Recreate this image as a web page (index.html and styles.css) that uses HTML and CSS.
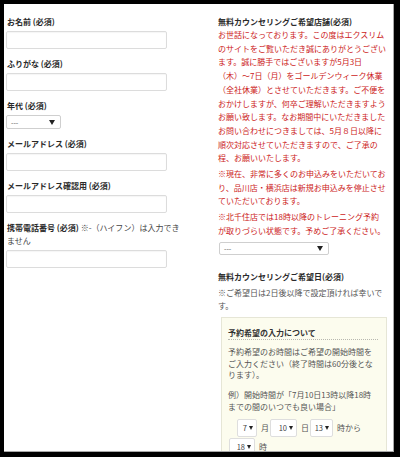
FILE: index.html
```html
<!DOCTYPE html>
<html lang="ja">
<head>
<meta charset="utf-8">
<link rel="stylesheet" href="styles.css">
</head>
<body>
<div class="page">
  <div class="col-left">
    <div class="field">
      <div class="label">お名前 (必須)</div>
      <div class="input"></div>
    </div>
    <div class="field">
      <div class="label">ふりがな (必須)</div>
      <div class="input"></div>
    </div>
    <div class="field">
      <div class="label">年代 (必須)</div>
      <div class="select select-age"><span>---</span><i class="tri"></i></div>
    </div>
    <div class="field">
      <div class="label">メールアドレス (必須)</div>
      <div class="input"></div>
    </div>
    <div class="field">
      <div class="label">メールアドレス確認用 (必須)</div>
      <div class="input"></div>
    </div>
    <div class="field">
      <div class="label">携帯電話番号 (必須) <span class="normal">※-（ハイフン）は入力でき<br>ません</span></div>
      <div class="input"></div>
    </div>
  </div>
  <div class="col-right">
    <div class="title">無料カウンセリングご希望店舗(必須)</div>
    <p class="notice">お世話になっております。この度はエクスリム<br>のサイトをご覧いただき誠にありがとうござい<br>ます。誠に勝手ではございますが5月3日<br>（木）～7日（月）をゴールデンウィーク休業<br>（全社休業）とさせていただきます。ご不便を<br>おかけしますが、何卒ご理解いただきますよう<br>お願い致します。なお期間中にいただきました<br>お問い合わせにつきましては、5月８日以降に<br>順次対応させていただきますので、ご了承の<br>程、お願いいたします。</p>
    <p class="notice gap">※現在、非常に多くのお申込みをいただいてお<br>り、品川店・横浜店は新規お申込みを停止させ<br>ていただいております。</p>
    <p class="notice gap">※北千住店では18時以降のトレーニング予約<br>が取りづらい状態です。予めご了承ください。</p>
    <div class="select select-shop"><span>---</span><i class="tri"></i></div>

    <div class="title title2">無料カウンセリングご希望日(必須)</div>
    <p class="note">※ご希望日は2日後以降で設定頂ければ幸いで<br>す。</p>
    <div class="box">
      <div class="box-title">予約希望の入力について</div>
      <p class="box-text first">予約希望のお時間はご希望の開始時間を<br>ご入力ください（終了時間は60分後とな<br>ります）。</p>
      <p class="box-text second">例）開始時間が「7月10日13時以降18時<br>までの間のいつでも良い場合」</p>
      <div class="sel-row row1">
        <span class="mini w20">7<i class="tri"></i></span><span class="unit">月</span>
        <span class="mini w27">10<i class="tri"></i></span><span class="unit">日</span>
        <span class="mini w23">13<i class="tri"></i></span><span class="unit">時から</span>
      </div>
      <div class="sel-row row2">
        <span class="mini w26">18<i class="tri"></i></span><span class="unit">時</span>
      </div>
    </div>
  </div>
</div>
</body>
</html>
```

FILE: styles.css
```css
html, body {
  margin: 0;
  padding: 0;
  height: 457px;
  overflow: hidden;
  background: #000;
}
body {
  font-family: "Noto Sans CJK JP", "Noto Sans", sans-serif;
  font-size: 8px;
  color: #333;
}
.page {
  margin: 4px 0 0 4px;
  width: 389px;
  height: 447px;
  background: #fff;
  border-right: 1px solid #a8a8a8;
  border-bottom: 1px solid #a8a8a8;
  overflow: hidden;
  display: flex;
  padding-top: 11px;
  box-sizing: content-box;
}
.page { height: 436px; }
.col-left {
  width: 212px;
  padding-left: 2px;
  flex: none;
}
.field {
  margin-bottom: 8px;
}
.label {
  font-weight: bold;
  line-height: 13px;
  margin-bottom: 3px;
  padding-left: 1px;
  color: #2a2a2a;
  white-space: nowrap;
}
.label .normal {
  font-weight: normal;
  color: #444;
}
.input {
  width: 161px;
  height: 18px;
  box-sizing: border-box;
  border: 1px solid #dcdcdc;
  border-radius: 2px;
  background: #fff;
  box-shadow: inset 0 1px 1px rgba(0,0,0,0.04);
}
.select {
  box-sizing: border-box;
  border: 1px solid #cfcfcf;
  border-radius: 2px;
  background: #fff;
  display: flex;
  align-items: center;
  justify-content: space-between;
  padding: 0 5px 0 4px;
  color: #555;
  font-size: 7px;
}
.select-age {
  width: 55px;
  height: 14px;
}
.select-shop {
  width: 110px;
  height: 13px;
  margin: 4px 0 0 1px;
}
.tri {
  display: inline-block;
  width: 0;
  height: 0;
  border-left: 3px solid transparent;
  border-right: 3px solid transparent;
  border-top: 5px solid #222;
}
.col-right {
  width: 170px;
  flex: none;
}
.title {
  font-weight: bold;
  line-height: 13px;
  color: #2a2a2a;
  white-space: nowrap;
}
.title2 {
  margin-top: 15px;
}
.notice {
  margin: 0;
  color: #cc1a1a;
  line-height: 13.7px;
  white-space: nowrap;
}
.notice.gap {
  margin-top: 2px;
}
.note {
  margin: 3px 0 0;
  color: #555;
  line-height: 13.7px;
  white-space: nowrap;
}
.box {
  margin: 4px 0 0 3px;
  width: 166px;
  height: 140px;
  box-sizing: border-box;
  background: #fcfcee;
  border: 1px solid #e6e6d6;
  padding: 8px 8px 0 6px;
}
.box-title {
  font-weight: bold;
  line-height: 13px;
  color: #333;
  border-bottom: 1px dotted #b8b8b0;
  white-space: nowrap;
}
.box-text {
  margin: 0;
  color: #555;
  line-height: 11.7px;
  white-space: nowrap;
}
.box-text.first {
  margin-top: 6px;
}
.box-text.second {
  margin-top: 8px;
}
.sel-row {
  display: flex;
  align-items: center;
  height: 18px;
  color: #555;
}
.row1 {
  margin-top: 6.5px;
  padding-left: 9px;
}
.row2 {
  margin-top: 1px;
  padding-left: 1px;
}
.mini {
  box-sizing: border-box;
  height: 18px;
  background: #fff;
  border: 1px solid #dedede;
  border-radius: 2px;
  display: flex;
  align-items: center;
  justify-content: flex-end;
  gap: 2px;
  padding-right: 3px;
  margin-right: 4px;
  color: #444;
  font-size: 7.5px;
}
.mini .tri {
  border-left-width: 2.5px;
  border-right-width: 2.5px;
  border-top-width: 4px;
}
.w20 { width: 20px; }
.w23 { width: 23px; }
.w26 { width: 26px; }
.w27 { width: 27px; }
.unit {
  margin-right: 1px;
  white-space: nowrap;
}
```
